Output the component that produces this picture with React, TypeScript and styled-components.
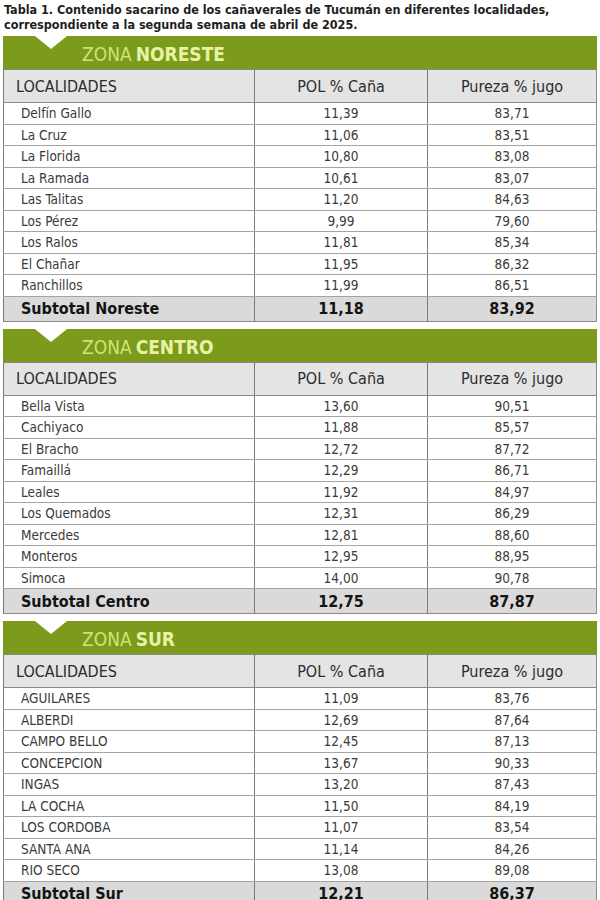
import React from 'react';
import styled, { createGlobalStyle } from 'styled-components';

const narrow = `"Liberation Sans Narrow", "DejaVu Sans Condensed", "Liberation Sans", sans-serif`;

const GlobalStyle = createGlobalStyle`
  html, body {
    margin: 0;
    padding: 0;
    background: #fff;
  }
  body {
    font-family: ${narrow};
  }
`;

const Page = styled.div`
  width: 600px;
  box-sizing: border-box;
  padding: 2px 3px 0 3px;
`;

const Caption = styled.div`
  font-family: ${narrow};
  font-weight: bold;
  font-size: 12.5px;
  line-height: 15px;
  color: #1e1e1e;
  padding-left: 1px;
  margin-bottom: 4px;
`;

const Zone = styled.section`
  margin-bottom: 7px;
`;

const Banner = styled.div`
  position: relative;
  height: 33px;
  box-sizing: border-box;
  padding: 3px 0 0 79px;
  background: #7c9b1d;
  display: flex;
  align-items: center;
  gap: 4px;
  font-size: 19px;

  &::before {
    content: '';
    position: absolute;
    left: 32px;
    top: 0;
    border-left: 16px solid transparent;
    border-right: 16px solid transparent;
    border-top: 13px solid #fff;
  }
`;

const ZoneLabel = styled.span`
  color: #cfe474;
`;

const ZoneName = styled.span`
  color: #e8f2a4;
  font-weight: bold;
`;

const Grid = styled.table`
  width: 100%;
  border-collapse: collapse;
  table-layout: fixed;
  border: 1px solid #8a8a8a;
`;

const HeadRow = styled.tr`
  height: 33px;
  background: #e4e4e4;
`;

const HeadCell = styled.th<{ $first?: boolean }>`
  font-weight: normal;
  font-size: 16px;
  color: #2c2c2c;
  text-align: ${p => (p.$first ? 'left' : 'center')};
  padding: 0 0 0 ${p => (p.$first ? '12px' : '0')};
  border-left: 1px solid #7a7a7a;
  border-bottom: 1px solid #8a8a8a;
`;

const Row = styled.tr`
  height: 21.5px;
  background: #fff;
`;

const Cell = styled.td<{ $first?: boolean }>`
  font-size: 13.5px;
  color: #3a3a3a;
  text-align: ${p => (p.$first ? 'left' : 'center')};
  padding: 0 0 0 ${p => (p.$first ? '17px' : '0')};
  border-left: 1px solid #7a7a7a;
  border-bottom: 1px solid #a4a4a4;
  white-space: nowrap;
`;

const TotalRow = styled.tr`
  height: 25px;
  background: #dadada;
`;

const TotalCell = styled.td<{ $first?: boolean }>`
  font-size: 16px;
  font-weight: bold;
  color: #141414;
  text-align: ${p => (p.$first ? 'left' : 'center')};
  padding: 0 0 0 ${p => (p.$first ? '17px' : '0')};
  border-left: 1px solid #7a7a7a;
  white-space: nowrap;
`;

type Line = [string, string, string];

interface ZoneData {
  name: string;
  rows: Line[];
  total: Line;
}

const zones: ZoneData[] = [
  {
    name: 'NORESTE',
    rows: [
      ['Delfín Gallo', '11,39', '83,71'],
      ['La Cruz', '11,06', '83,51'],
      ['La Florida', '10,80', '83,08'],
      ['La Ramada', '10,61', '83,07'],
      ['Las Talitas', '11,20', '84,63'],
      ['Los Pérez', '9,99', '79,60'],
      ['Los Ralos', '11,81', '85,34'],
      ['El Chañar', '11,95', '86,32'],
      ['Ranchillos', '11,99', '86,51'],
    ],
    total: ['Subtotal Noreste', '11,18', '83,92'],
  },
  {
    name: 'CENTRO',
    rows: [
      ['Bella Vista', '13,60', '90,51'],
      ['Cachiyaco', '11,88', '85,57'],
      ['El Bracho', '12,72', '87,72'],
      ['Famaillá', '12,29', '86,71'],
      ['Leales', '11,92', '84,97'],
      ['Los Quemados', '12,31', '86,29'],
      ['Mercedes', '12,81', '88,60'],
      ['Monteros', '12,95', '88,95'],
      ['Simoca', '14,00', '90,78'],
    ],
    total: ['Subtotal Centro', '12,75', '87,87'],
  },
  {
    name: 'SUR',
    rows: [
      ['AGUILARES', '11,09', '83,76'],
      ['ALBERDI', '12,69', '87,64'],
      ['CAMPO BELLO', '12,45', '87,13'],
      ['CONCEPCION', '13,67', '90,33'],
      ['INGAS', '13,20', '87,43'],
      ['LA COCHA', '11,50', '84,19'],
      ['LOS CORDOBA', '11,07', '83,54'],
      ['SANTA ANA', '11,14', '84,26'],
      ['RIO SECO', '13,08', '89,08'],
    ],
    total: ['Subtotal Sur', '12,21', '86,37'],
  },
];

const ZoneTable = ({ zone }: { zone: ZoneData }) => (
  <Zone>
    <Banner>
      <ZoneLabel>ZONA</ZoneLabel>
      <ZoneName>{zone.name}</ZoneName>
    </Banner>
    <Grid>
      <colgroup>
        <col style={{ width: 251 }} />
        <col style={{ width: 173 }} />
        <col />
      </colgroup>
      <thead>
        <HeadRow>
          <HeadCell $first>LOCALIDADES</HeadCell>
          <HeadCell>POL % Caña</HeadCell>
          <HeadCell>Pureza % jugo</HeadCell>
        </HeadRow>
      </thead>
      <tbody>
        {zone.rows.map(r => (
          <Row key={r[0]}>
            <Cell $first>{r[0]}</Cell>
            <Cell>{r[1]}</Cell>
            <Cell>{r[2]}</Cell>
          </Row>
        ))}
        <TotalRow>
          <TotalCell $first>{zone.total[0]}</TotalCell>
          <TotalCell>{zone.total[1]}</TotalCell>
          <TotalCell>{zone.total[2]}</TotalCell>
        </TotalRow>
      </tbody>
    </Grid>
  </Zone>
);

const App = () => (
  <>
    <GlobalStyle />
    <Page>
      <Caption>
        Tabla 1. Contenido sacarino de los cañaverales de Tucumán en diferentes localidades,
        <br />
        correspondiente a la segunda semana de abril de 2025.
      </Caption>
      {zones.map(z => (
        <ZoneTable key={z.name} zone={z} />
      ))}
    </Page>
  </>
);

export default App;
